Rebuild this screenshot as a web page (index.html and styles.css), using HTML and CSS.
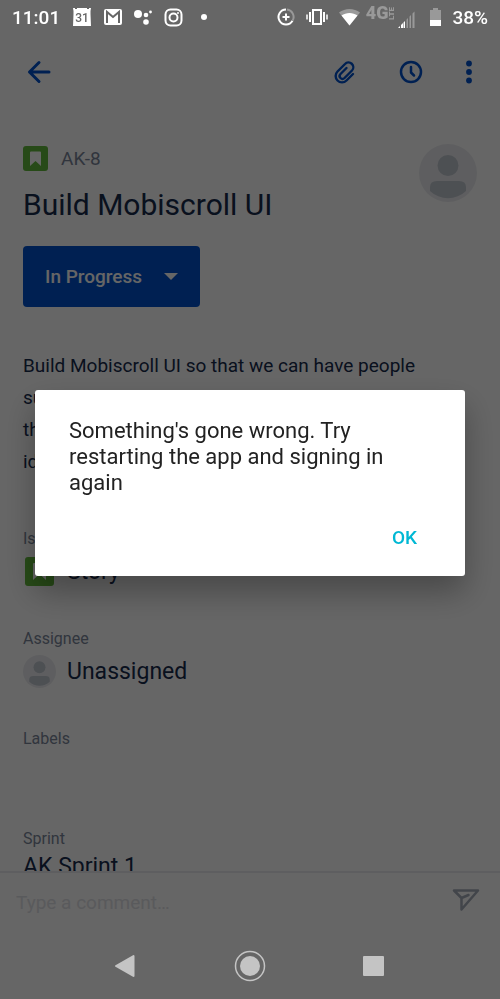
FILE: index.html
```html
<!DOCTYPE html>
<html lang="en">
<head>
    <meta charset="UTF-8">
    <meta name="viewport" content="width=device-width, initial-scale=1.0">
    <title>AK-8 Build Mobiscroll UI</title>
    <link rel="stylesheet" href="styles.css">
</head>
<body>
    <!-- Status bar -->
    <div class="status-bar">
        <span class="status-time">11:01</span>
        <svg class="icon-calendar" width="20" height="20" viewBox="0 0 20 20">
            <path fill="#fff" d="M1 1h2v1h2V1h10v1h2V1h2l-.5 3v3l.5 12H1l.5-12V4z"/>
            <text x="10" y="15" text-anchor="middle">31</text>
        </svg>
        <svg width="18" height="16" viewBox="0 0 18 16">
            <rect width="18" height="16" rx="2" fill="#fff"/>
            <path d="M3 14V3l6 5 6-5v11" fill="none" stroke="#666" stroke-width="2"/>
        </svg>
        <svg width="18" height="16" viewBox="0 0 18 16" fill="#fff">
            <circle cx="4" cy="5" r="4"/>
            <circle cx="12" cy="6" r="2.3"/>
            <circle cx="12" cy="13" r="2.8"/>
            <circle cx="16.5" cy="3" r="1.4"/>
        </svg>
        <svg width="19" height="19" viewBox="0 0 19 19" fill="none" stroke="#fff" stroke-width="2">
            <rect x="1.5" y="1.5" width="16" height="16" rx="5"/>
            <circle cx="9.5" cy="9.5" r="4"/>
            <circle cx="14" cy="5" r="1" fill="#fff" stroke="none"/>
        </svg>
        <span class="status-dot"></span>
        <div class="status-right">
            <svg width="18" height="18" viewBox="0 0 18 18" fill="none" stroke="#fff" stroke-width="2">
                <path d="M9 1.5a7.5 7.5 0 1 0 6.5 11.3"/>
                <path d="M10 1.5a7.5 7.5 0 0 1 5.5 11.3" stroke="#999"/>
                <path d="M9 5.500v7M5.500 9h7"/>
            </svg>
            <svg width="22" height="18" viewBox="0 0 22 18" fill="none" stroke="#fff">
                <rect x="7" y="2" width="8" height="14" stroke-width="2"/>
                <path d="M4 4v10M18 4v10" stroke-width="2"/>
                <path d="M1 6.5v5M21 6.5v5" stroke-width="1.5"/>
            </svg>
            <svg width="21" height="18" viewBox="0 0 21 18">
                <path d="M0 4.5C6-.2 15-.2 21 4.5L10.5 17.5z" fill="#999"/>
                <path d="M2.5 7.5C7 4 14 4 18.5 7.5l-8 10z" fill="#fff"/>
            </svg>
            <div class="network">
                <span class="network-gen">4G</span><span class="network-lte">LTE</span>
            </div>
            <svg class="icon-signal" width="17" height="17" viewBox="0 0 17 17">
                <path d="M0 17l2-2v2zM3 14l2-2v5H3zM5.5 11.5L7 10v7H5.5z" fill="#fff"/>
                <path d="M8.5 8.5L10 7v10H8.5zM11.5 5.5L13 4v13h-1.5zM14.5 2.5L16.5.5V17h-2z" fill="#999"/>
            </svg>
            <svg class="icon-battery" width="11" height="18" viewBox="0 0 11 18">
                <path d="M0 2h3V0h5v2h3v10H0z" fill="#999"/>
                <path d="M0 12h11v6H0z" fill="#fff"/>
            </svg>
            <span class="status-time">38%</span>
        </div>
    </div>

    <!-- Issue screen -->
    <header class="toolbar">
        <button class="icon-button" aria-label="Back">
            <svg width="24" height="24" viewBox="0 0 24 24" fill="none" stroke="#0052cc" stroke-width="3" stroke-linecap="round" stroke-linejoin="round">
                <path d="M12 2.5L2.5 12l9.500 9.500M2.5 12H22"/>
            </svg>
        </button>
        <div class="toolbar-actions">
            <button class="icon-button" aria-label="Attach">
                <svg width="24" height="24" viewBox="0 0 24 24" fill="none" stroke="#0052cc" stroke-width="2.4" stroke-linecap="round" stroke-linejoin="round">
                    <path d="M21 14l-6.500 6.500a6.200 6.200 0 0 1-9-9L13 4a4.700 4.700 0 0 1 7 6.500l-7.500 7.500a2.700 2.700 0 0 1-4-4l6-6"/>
                </svg>
            </button>
            <button class="icon-button" aria-label="History">
                <svg width="24" height="24" viewBox="0 0 24 24" fill="none" stroke="#0052cc" stroke-width="2.5" stroke-linecap="round" stroke-linejoin="round">
                    <circle cx="12" cy="12" r="10"/>
                    <path d="M12 7v5.500l3 3"/>
                </svg>
            </button>
            <button class="icon-button" aria-label="More">
                <svg width="6" height="24" viewBox="0 0 6 24" fill="#0052cc">
                    <circle cx="3" cy="3.5" r="2.9"/>
                    <circle cx="3" cy="12" r="2.9"/>
                    <circle cx="3" cy="20.5" r="2.9"/>
                </svg>
            </button>
        </div>
    </header>

    <main class="issue">
        <div class="issue-header">
            <div>
                <div class="issue-key">
                    <svg width="25" height="25" viewBox="0 0 25 25">
                        <rect width="25" height="25" rx="3" fill="#63ba3c"/>
                        <path d="M7 6.500q0-1 1-1h9q1 0 1 1V20l-5.500-5L7 20z" fill="#fff"/>
                    </svg>
                    <span>AK-8</span>
                </div>
                <h1>Build Mobiscroll UI</h1>
            </div>
            <svg width="58" height="58" viewBox="0 0 58 58">
                <circle cx="29" cy="29" r="29" fill="#ebecf0"/>
                <circle cx="29" cy="21.5" r="10.5" fill="#c1c7d0"/>
                <path d="M18 37h22q7 0 7 6v4a26 26 0 0 1-36 0v-4q0-6 7-6z" fill="#c1c7d0"/>
            </svg>
        </div>

        <button class="status-button">
            In Progress
            <svg width="14" height="7" viewBox="0 0 14 7" fill="#fff">
                <path d="M0 0h14L7 7z"/>
            </svg>
        </button>

        <p class="description">Build Mobiscroll UI so that we can have people submit their own ideas and requests for all of the apps we build, and vote on all of the best ideas</p>

        <section class="field">
            <h2>Issue Type</h2>
            <div class="field-value">
                <svg width="33" height="33" viewBox="0 0 33 33">
                    <rect x="2" y="2" width="29" height="29" rx="3" fill="#63ba3c"/>
                    <path d="M10 9q0-1 1-1h11q1 0 1 1v16l-6.500-6L10 25z" fill="#fff"/>
                </svg>
                <span>Story</span>
            </div>
        </section>
        <section class="field">
            <h2>Assignee</h2>
            <div class="field-value">
                <svg width="33" height="33" viewBox="0 0 58 58">
                    <circle cx="29" cy="29" r="29" fill="#ebecf0"/>
                    <circle cx="29" cy="21.5" r="10.5" fill="#c1c7d0"/>
                    <path d="M18 37h22q7 0 7 6v4a26 26 0 0 1-36 0v-4q0-6 7-6z" fill="#c1c7d0"/>
                </svg>
                <span>Unassigned</span>
            </div>
        </section>
        <section class="field">
            <h2>Labels</h2>
            <div class="field-value"></div>
        </section>
        <section class="field">
            <h2>Sprint</h2>
            <div class="field-value">AK Sprint 1</div>
        </section>
    </main>

    <footer class="comment-bar">
        <input type="text" aria-label="Comment" placeholder="Type a comment…">
        <button class="icon-button send-button" aria-label="Send">
            <svg width="28" height="24" viewBox="0 0 28 24" fill="none" stroke="#a5adba" stroke-width="2.5" stroke-linecap="round" stroke-linejoin="round">
                <path d="M2 2.500h24L9.500 21.500V10z M9.500 10l7-3"/>
            </svg>
        </button>
    </footer>

    <!-- System navigation -->
    <nav class="nav-bar">
        <button class="icon-button" aria-label="System back">
            <svg width="24" height="24" viewBox="0 0 24 24">
                <path d="M3 12L20.500 2v20z" fill="#c4c4c4" stroke="#c4c4c4" stroke-width="2" stroke-linejoin="round"/>
            </svg>
        </button>
        <button class="icon-button" aria-label="Home">
            <svg width="32" height="32" viewBox="0 0 32 32">
                <circle cx="16" cy="16" r="14.5" fill="none" stroke="#c4c4c4" stroke-width="1.5"/>
                <circle cx="16" cy="16" r="10" fill="#c4c4c4"/>
            </svg>
        </button>
        <button class="icon-button" aria-label="Recent apps">
            <svg width="22" height="22" viewBox="0 0 22 22">
                <rect y="1" width="21" height="20" rx="1" fill="#c4c4c4"/>
            </svg>
        </button>
    </nav>

    <!-- Error dialog -->
    <div class="overlay">
        <div class="dialog" role="alertdialog" aria-modal="true" aria-describedby="message">
            <p id="message">Something's gone wrong. Try restarting the app and signing in again</p>
            <button class="ok-button">OK</button>
        </div>
    </div>
</body>
</html>
```

FILE: styles.css
```css
* {
    box-sizing: border-box;
}
body {
    display: flex;
    flex-direction: column;
    height: 100vh;
    margin: 0;
    overflow: hidden;
    background-color: #fff;
    color: #172b4d;
    font-family: Roboto, sans-serif;
}
svg {
    display: block;
    flex: none;
}
h1, h2, p {
    margin: 0;
    font-weight: 400;
}
button, input {
    font-family: inherit;
}
.icon-button {
    padding: 0;
    border: none;
    background: none;
    cursor: pointer;
}

/* Status bar, drawn over the dimmed screen */
.status-bar {
    position: relative;
    z-index: 2;
    display: flex;
    align-items: center;
    gap: 12px;
    height: 34px;
    padding: 0 12px;
    color: #fff;
}
.status-time {
    font-size: 19px;
    font-weight: 500;
}
.icon-calendar text {
    fill: #666;
    font-size: 12px;
    font-weight: 500;
}
.status-dot {
    width: 6px;
    height: 6px;
    margin-left: 6px;
    border-radius: 50%;
    background-color: #fff;
}
.status-right {
    display: flex;
    align-items: center;
    gap: 11px;
    margin-left: auto;
}
.network {
    display: flex;
    align-self: flex-start;
    margin: 0 -9px 0 -5px;
    color: #999;
    font-weight: 900;
    line-height: 14px;
}
.network-gen {
    font-size: 18px;
}
.network-lte {
    font-size: 8px;
    line-height: 8px;
    writing-mode: vertical-rl;
    transform: rotate(180deg);
}
.icon-signal {
    margin-top: 4px;
}
.icon-battery {
    margin-left: 4px;
}

.toolbar {
    display: flex;
    align-items: center;
    justify-content: space-between;
    height: 76px;
    padding: 0 28px 0 27px;
}
.toolbar-actions {
    display: flex;
    gap: 43px;
}

.issue {
    flex: 1;
    min-height: 0;
    padding: 34px 23px 0;
    overflow: hidden;
}
.issue-header {
    display: flex;
    justify-content: space-between;
}
.issue-key {
    display: flex;
    align-items: center;
    gap: 13px;
    height: 28px;
    color: #7a869a;
    font-size: 19px;
}
h1 {
    margin-top: 14px;
    font-size: 30px;
    line-height: 38px;
}
.status-button {
    display: flex;
    align-items: center;
    gap: 22px;
    height: 61px;
    margin-top: 22px;
    padding: 0 22px;
    border: none;
    border-radius: 4px;
    background-color: #0052cc;
    color: #fff;
    font-size: 19px;
    font-weight: 500;
}
.description {
    max-width: 405px;
    margin-top: 43px;
    font-size: 19px;
    line-height: 32px;
}
.field {
    height: 100px;
}
.description + .field {
    margin-top: 50px;
}
h2 {
    color: #7a869a;
    font-size: 16px;
    line-height: 22px;
}
.field-value {
    display: flex;
    align-items: center;
    gap: 11px;
    margin-top: 5px;
    font-size: 23px;
    line-height: 23px;
}

.comment-bar {
    display: flex;
    align-items: center;
    height: 61px;
    padding: 0 20px 0 16px;
    border-top: 2px solid #ebecf0;
}
.comment-bar input {
    flex: 1;
    min-width: 0;
    padding: 0;
    border: none;
    outline: none;
    background: none;
    color: #172b4d;
    font-size: 19px;
}
.comment-bar input::placeholder {
    color: #dfe1e6;
}
.send-button {
    margin-bottom: 6px;
}

.nav-bar {
    position: relative;
    z-index: 2;
    display: flex;
    align-items: center;
    justify-content: center;
    gap: 97px;
    height: 67px;
    padding-right: 2px;
}

.overlay {
    position: fixed;
    inset: 0;
    z-index: 1;
    display: flex;
    align-items: center;
    justify-content: center;
    padding: 34px 35px 67px;
    background-color: rgba(0, 0, 0, 0.6);
}
.dialog {
    display: flex;
    flex-direction: column;
    width: 100%;
    padding: 28px 34px 14px;
    border-radius: 3px;
    background-color: #fff;
    box-shadow: 0 16px 32px rgba(0, 0, 0, 0.3);
}
#message {
    color: #222;
    font-size: 22px;
    line-height: 26px;
}
.ok-button {
    align-self: flex-end;
    height: 50px;
    margin-top: 16px;
    padding: 0 14px;
    border: none;
    background: none;
    color: #00b8d4;
    font-size: 19px;
    font-weight: 500;
    cursor: pointer;
}
```
